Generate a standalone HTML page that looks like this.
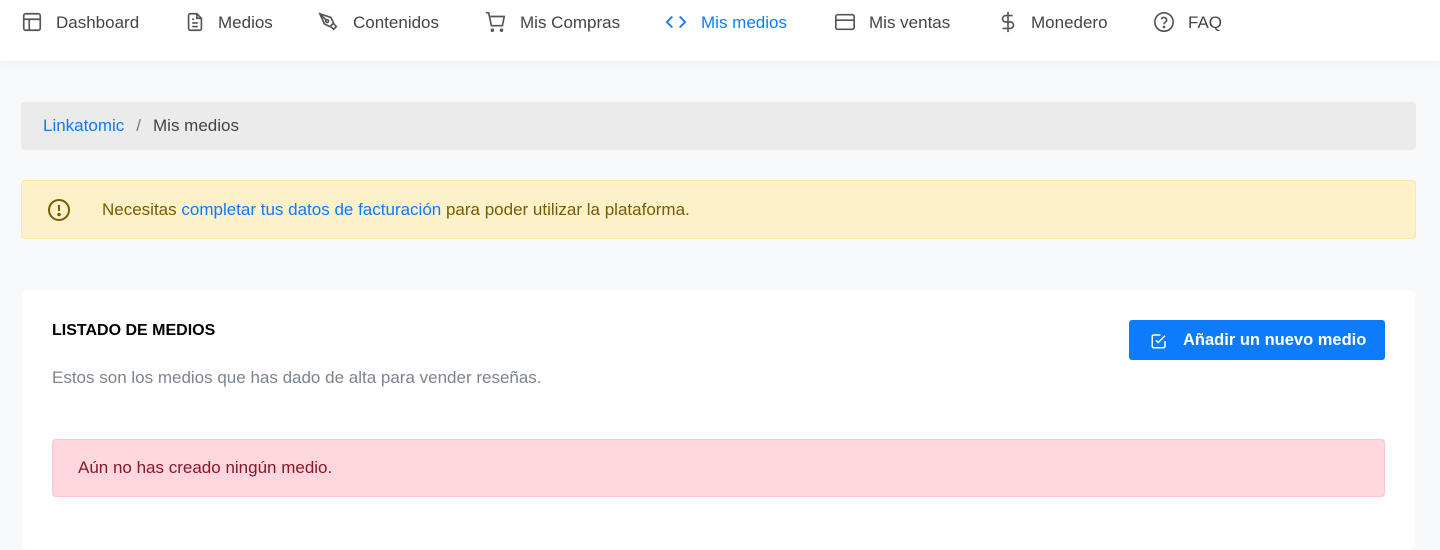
<!DOCTYPE html>
<html><head><meta charset="utf-8"><style>
*{box-sizing:border-box;margin:0;padding:0}
body{width:1440px;height:533px;overflow:hidden;background:#f7f8fa;font-family:"Liberation Sans",Roboto,sans-serif;position:relative}
.hdr{position:absolute;left:0;top:0;width:1440px;height:61px;background:#fff;box-shadow:0 2px 6px rgba(0,0,0,0.04)}
.ni{position:absolute;top:12px;font-size:17px;color:#444;line-height:22px}
.ic{position:absolute;top:11px}
.ic svg{display:block;width:22px;height:22px}
.bc{position:absolute;left:21px;top:102px;width:1395px;height:48px;background:#ebebeb;border-radius:4px;font-size:17px;line-height:48px;padding-left:22px;color:#444}
.bc a{color:#0d7bfa;text-decoration:none}
.al{position:absolute;left:21px;top:180px;width:1395px;height:59px;background:#fdf1c9;border:1px solid #fbe7a6;border-radius:4px;color:#7a5b00;font-size:17px;line-height:57px;padding-left:80px}
.al a{color:#0d7bfa}
.card{position:absolute;left:22px;top:290px;width:1393px;height:260px;background:#fff;border-radius:5px}
h3{position:absolute;left:30px;top:32px;font-size:16px;font-weight:bold;color:#000}
.sub{position:absolute;left:30px;top:78px;font-size:17px;color:#7c8490}
.btn{position:absolute;left:1107px;top:30px;width:256px;height:40px;background:#0d7bfa;border-radius:3px;color:#fff;font-weight:bold;font-size:16.5px;line-height:40px;padding-left:54px}
.err{position:absolute;left:30px;top:149px;width:1333px;height:58px;background:#fdd6de;border:1px solid #fbc4cf;border-radius:4px;color:#8a1628;font-size:17px;line-height:56px;padding-left:25px}
</style></head><body>
<div class="hdr">
<div class="ic" style="left:21px"><svg viewBox="0 0 24 24" fill="none" stroke="#555" stroke-width="1.8"><rect x="3" y="3" width="18" height="18" rx="2"/><path d="M3 9h18M9 9v12"/></svg></div>
<div class="ni" style="left:56px">Dashboard</div>
<div class="ic" style="left:184px"><svg viewBox="0 0 24 24" fill="none" stroke="#555" stroke-width="1.8"><path d="M14 3H7a2 2 0 0 0-2 2v14a2 2 0 0 0 2 2h10a2 2 0 0 0 2-2V8z"/><path d="M14 3v5h5M9 13h6M9 17h6M9 9h2"/></svg></div>
<div class="ni" style="left:218px">Medios</div>
<div class="ic" style="left:318px"><svg viewBox="0 0 24 24" fill="none" stroke="#555" stroke-width="1.8"><path d="M2 3l12 4 3 6-4 4-6-3z"/><path d="M2 3l7 7"/><circle cx="10" cy="11" r="1.5"/><path d="M14 17l3 3 3-3-3-3"/></svg></div>
<div class="ni" style="left:353px">Contenidos</div>
<div class="ic" style="left:485px"><svg viewBox="0 0 24 24" fill="none" stroke="#555" stroke-width="1.8"><path d="M1 2h3l3 14h12l2-10H6"/><circle cx="8" cy="21" r="1"/><circle cx="18" cy="21" r="1"/></svg></div>
<div class="ni" style="left:520px">Mis Compras</div>
<div class="ic" style="left:665px"><svg viewBox="0 0 24 24" fill="none" stroke="#0d7bfa" stroke-width="2"><path d="M8 6l-6 6 6 6M16 6l6 6-6 6"/></svg></div>
<div class="ni" style="left:701px;color:#0d7bfa">Mis medios</div>
<div class="ic" style="left:834px"><svg viewBox="0 0 24 24" fill="none" stroke="#555" stroke-width="1.8"><rect x="2" y="4" width="20" height="16" rx="2"/><path d="M2 10h20"/></svg></div>
<div class="ni" style="left:869px">Mis ventas</div>
<div class="ic" style="left:997px"><svg viewBox="0 0 24 24" fill="none" stroke="#555" stroke-width="1.8"><path d="M12 1v22M17 5H9.5a3.5 3.5 0 0 0 0 7h5a3.5 3.5 0 0 1 0 7H6"/></svg></div>
<div class="ni" style="left:1031px">Monedero</div>
<div class="ic" style="left:1153px"><svg viewBox="0 0 24 24" fill="none" stroke="#555" stroke-width="1.8"><circle cx="12" cy="12" r="10"/><path d="M9.1 9a3 3 0 0 1 5.8 1c0 2-3 2.5-3 4.5"/><circle cx="12" cy="17.5" r=".6" fill="#555"/></svg></div>
<div class="ni" style="left:1188px">FAQ</div>
</div>
<div class="bc"><a>Linkatomic</a><span style="color:#777;padding:0 12px">/</span>Mis medios</div>
<div class="al"><svg style="position:absolute;left:25px;top:17px" width="24" height="24" viewBox="0 0 24 24" fill="none" stroke="#7a5b00" stroke-width="2"><circle cx="12" cy="12" r="10"/><path d="M12 7v6"/><circle cx="12" cy="16.5" r=".8" fill="#7a5b00"/></svg>Necesitas <a>completar tus datos de facturación</a> para poder utilizar la plataforma.</div>
<div class="card">
<h3>LISTADO DE MEDIOS</h3>
<div class="sub">Estos son los medios que has dado de alta para vender reseñas.</div>
<div class="btn"><svg style="position:absolute;left:21px;top:12px" width="18" height="18" viewBox="0 0 24 24" fill="none" stroke="#fff" stroke-width="2"><path d="M20 12v7a2 2 0 0 1-2 2H5a2 2 0 0 1-2-2V6a2 2 0 0 1 2-2h9"/><path d="M8 11l3 3 9-9"/></svg>Añadir un nuevo medio</div>
<div class="err">Aún no has creado ningún medio.</div>
</div>
</body></html>
